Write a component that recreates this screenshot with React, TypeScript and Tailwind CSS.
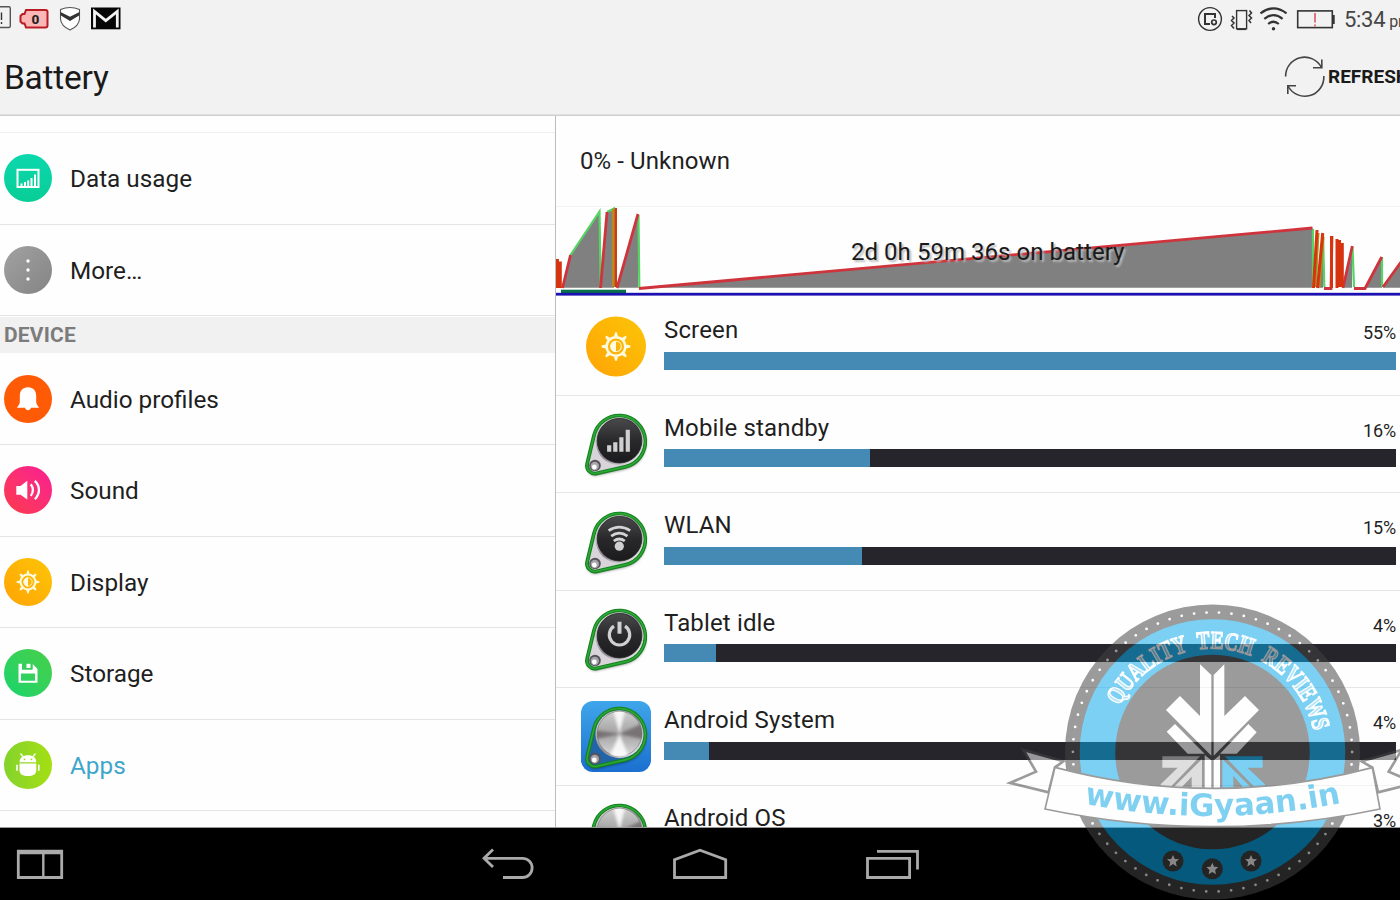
import type { ReactNode } from "react";

const ringDots = { r: 139.6, gap: (2 * Math.PI * 139.6) / 70 };

function Sun({ cx, cy, s }: { cx: number; cy: number; s: number }) {
  return (
    <g transform={`translate(${cx} ${cy}) scale(${s})`} fill="none" stroke="#fffbe0" strokeWidth="2">
      <circle r="7.4" />
      {[0, 45, 90, 135, 180, 225, 270, 315].map((a) => (
        <path key={a} d="M-1.6 -8L-0.7 -11.4H0.7L1.6 -8Z" fill="#fffbe0" stroke="none" transform={`rotate(${a})`} />
      ))}
      <circle r="4.2" strokeWidth="0.8" />
      <path d="M0 -4.4A4.4 4.4 0 0 0 0 4.4Z" fill="#fffbe0" stroke="none" />
    </g>
  );
}

const glyphs: Record<string, ReactNode> = {
  data: (
    <g fill="none" stroke="#fff">
      <rect x="13.5" y="15.8" width="21" height="17.2" strokeWidth="2" />
      <path d="M17.5 32V29.5M21 32V28M24.2 32V26.5M27.5 32V24M31 32V20.5" strokeWidth="2" />
    </g>
  ),
  more: (
    <g fill="#fff">
      <circle cx="24" cy="15" r="1.7" />
      <circle cx="24" cy="24" r="1.7" />
      <circle cx="24" cy="33" r="1.7" />
    </g>
  ),
  bell: (
    <path
      d="M24 12.3C18.5 12.3 15.8 16 15.8 21V26.5C15.8 29.5 14.2 31 12.7 32.8H21C21.4 34.4 22.6 35.2 24 35.2S26.6 34.4 27 32.8H35.3C33.8 31 32.2 29.5 32.2 26.5V21C32.2 16 29.5 12.3 24 12.3Z"
      fill="#fff"
    />
  ),
  sound: (
    <g>
      <path d="M12.3 20H16.5L23.3 14.8V33.5L16.5 28.7H12.3Z" fill="#fff" />
      <path d="M26.8 18.3Q31 24 26.8 29.8M30.8 14.8C36.3 20 36.3 28 30.8 33.2" fill="none" stroke="#fff" strokeWidth="2.3" />
    </g>
  ),
  display: <Sun cx={24} cy={24} s={1} />,
  storage: (
    <g fill="#fff">
      <path
        fillRule="evenodd"
        d="M14.5 14.8H18V20.5H28.5V14.8L33.5 20V33.8H14.5ZM17 24.5V31.7H31V24.5Z"
      />
      <path d="M18 14.8H28.5V20.5H18Z" fill="#34cf5a" />
      <path d="M22.5 14.8H26.5V19H22.5Z" />
    </g>
  ),
  apps: (
    <g fill="#fff">
      <path d="M15.5 21.3C15.5 16.8 19 14.2 24 14.2S32.3 16.8 32.3 21.3Z" />
      <path d="M19 15.5L16.5 12.5M29 15.5L31.5 12.5" stroke="#fff" strokeWidth="1.2" />
      <circle cx="20.5" cy="18.3" r="0.9" fill="#98dc1c" />
      <circle cx="27.5" cy="18.3" r="0.9" fill="#98dc1c" />
      <path d="M15.5 22.5H32.3V29C32.3 33.5 28.8 35 24 35S15.5 33.5 15.5 29Z" />
      <rect x="12.2" y="23.5" width="1.6" height="6.5" rx="0.8" />
      <rect x="34" y="23.5" width="1.6" height="6.5" rx="0.8" />
    </g>
  ),
};

function SettingRow({ icon, label, disc, active }: { icon: string; label: string; disc: string; active?: boolean }) {
  return (
    <li className="flex h-[91.5px] items-center border-b border-[#e4e4e4] pl-1">
      <span className={`flex size-12 rounded-full ${disc}`}>
        <svg viewBox="0 0 48 48" className="size-12">
          {glyphs[icon]}
        </svg>
      </span>
      <span className={`pt-[2px] pl-[18px] text-[24.3px] leading-8 ${active ? "text-[#3fa6cb]" : "text-[#1f1f1f]"}`}>{label}</span>
    </li>
  );
}

const tear = "M14 31.4A26 26 0 1 1 45.1 62.9L16.8 69.3A8 8 0 0 1 7.2 59.6Z";

function TearIcon({ kind, id }: { kind: string; id: string }) {
  const metal = kind === "system" || kind === "os";
  return (
    <svg viewBox="0 0 72 76" className="h-[76px] w-[72px] overflow-visible">
      <defs>
        <linearGradient id={`${id}-rim`} x1="0" y1="0" x2="1" y2="1">
          <stop offset="0" stopColor="#e8e8e8" />
          <stop offset="0.5" stopColor="#8c8690" />
          <stop offset="0.85" stopColor="#e0dde0" />
        </linearGradient>
        <linearGradient id={`${id}-disc`} x1="0" y1="0" x2="0" y2="1">
          <stop offset="0" stopColor={metal ? "#d0d0d0" : "#4a4a4c"} />
          <stop offset="0.5" stopColor={metal ? "#a3a1a2" : "#29292b"} />
          <stop offset="1" stopColor={metal ? "#dcdcdc" : "#1b1b1d"} />
        </linearGradient>
        <linearGradient id={`${id}-bg`} x1="0" y1="0" x2="0" y2="1">
          <stop offset="0" stopColor="#3fa6ea" />
          <stop offset="1" stopColor="#1c6fd0" />
        </linearGradient>
        <filter id={`${id}-blur`} x="-20%" y="-20%" width="140%" height="140%">
          <feGaussianBlur stdDeviation="1.8" />
        </filter>
        <clipPath id={`${id}-clip`}>
          <circle cx="39.5" cy="37" r="22.5" />
        </clipPath>
      </defs>
      {kind === "system" && <rect x="1" y="4" width="70" height="71" rx="12" fill={`url(#${id}-bg)`} />}
      <path d={tear} fill="#000" opacity="0.5" transform="translate(0.5 2)" filter={`url(#${id}-blur)`} />
      <path d={tear} fill={kind === "system" ? "#2165a8" : "#d9d4da"} stroke="#14801f" strokeWidth="3.8" />
      <path d={tear} fill="none" stroke="#2ca835" strokeWidth="1.6" />
      <g transform="translate(0 1.2)">
        <circle cx="39.5" cy="36" r="24" fill={`url(#${id}-rim)`} />
        <circle cx="39.5" cy="35.5" r="22.3" fill={`url(#${id}-disc)`} stroke={metal ? "#888" : "#222"} strokeWidth="0.8" />
        {kind === "signal" && <path d="M29.2 46.5V40M35.3 46.5V37M41.4 46.5V32M47.8 46.5V24.5" stroke="#cfcfcf" strokeWidth="4.2" />}
        {kind === "wifi" && (
          <g fill="none" stroke="#d4d4d4" strokeWidth="2.7">
            <path d="M28.6 27.5Q39.3 20.5 50.2 27.5M31.2 33Q39.3 27 47.5 33M33.8 37.8Q39.3 33.8 44.8 37.8" />
            <circle cx="39.3" cy="43" r="4.6" fill="#cfcfcf" stroke="none" />
          </g>
        )}
        {kind === "power" && (
          <g fill="none" stroke="#d0d0d0" strokeWidth="3.2">
            <path d="M34 26A10.2 10.2 0 1 0 45 26" />
            <path d="M39.5 21.5V33.5" strokeWidth="4" />
          </g>
        )}
      </g>
      {metal && (
        <g clipPath={`url(#${id}-clip)`}>
          <g filter={`url(#${id}-blur)`}>
            <path d="M39.5 37L31 5H47Z" fill="#fff" opacity="0.85" />
            <path d="M39.5 37L26 68H52Z" fill="#fff" opacity="0.85" />
            <path d="M39.5 37L72 22V44Z" fill="#6d6669" opacity="0.8" />
            <path d="M39.5 37L8 32V44Z" fill="#6d6669" opacity="0.8" />
          </g>
        </g>
      )}
      <circle cx="15" cy="61.5" r="5.8" fill="#55515a" />
      <circle cx="14.8" cy="62" r="4.2" fill="#a8a5aa" />
      <circle cx="14.3" cy="63" r="2.4" fill="#fff" />
    </svg>
  );
}

const usage = [
  { kind: "screen", label: "Screen", pct: "55%", fill: 732 },
  { kind: "signal", label: "Mobile standby", pct: "16%", fill: 206 },
  { kind: "wifi", label: "WLAN", pct: "15%", fill: 198 },
  { kind: "power", label: "Tablet idle", pct: "4%", fill: 52 },
  { kind: "system", label: "Android System", pct: "4%", fill: 44.5 },
  { kind: "os", label: "Android OS", pct: "3%", fill: 36 },
];

function UsageRow({ kind, label, pct, fill }: (typeof usage)[number]) {
  return (
    <li className="flex h-[97.5px] shrink-0 border-b border-[#e6e6e6] pl-6">
      <div className="h-[76px] w-[72px] shrink-0 pt-[8.5px]">
        {kind === "screen" ? (
          <svg viewBox="0 0 72 76" className="h-[76px] w-[72px]">
            <defs>
              <linearGradient id="sun" x1="1" y1="0" x2="0" y2="1">
                <stop offset="0" stopColor="#fcc507" />
                <stop offset="1" stopColor="#ffa305" />
              </linearGradient>
            </defs>
            <circle cx="36" cy="39.5" r="30" fill="url(#sun)" />
            <Sun cx={36} cy={39.5} s={1.26} />
          </svg>
        ) : (
          <TearIcon kind={kind} id={kind} />
        )}
      </div>
      <div className="ml-3 flex w-[732px] shrink-0 flex-col pt-4">
        <div className="flex h-[37.5px] items-start justify-between">
          <span className="text-2xl tracking-[0.15px] text-[#1f1f1f]">{label}</span>
          <span className="pt-[5px] text-lg tracking-[-0.1px] text-[#1f1f1f]">{pct}</span>
        </div>
        <div className="h-[18px] bg-[#25252b]">
          <div className="h-full bg-[#448ab5]" style={{ width: fill }} />
        </div>
      </div>
    </li>
  );
}

function HistoryChart() {
  return (
    <svg viewBox="0 0 845 90" className="h-[90px] w-[845px]" fill="none">
      <g fill="#808080">
        <path d="M6.5 80.7L14.5 48L44 4.5V80.7Z" />
        <path d="M45 80.7L51 5L58 2V80.7Z" />
        <path d="M61 80.7L82 8V80.7Z" />
        <path d="M83 80.7L756.5 21V80.7Z" />
        <path d="M761 80.7L767 30V80.7ZM787 80.7L796 40V80.7ZM809 80.7L826 50V80.7ZM827 80.7L845 56V80.7Z" />
      </g>
      <g stroke="#55d463" strokeWidth="2.2">
        <path d="M14.5 48L43.5 4.5L44.7 80M51 5L58 1.5V80M82.5 8L83.3 81M757 22V80M762 26L760 80M767 27L768.3 80M796.5 40L798 80M826 50V80" />
      </g>
      <path d="M57.5 2V80M758.5 80L762 26M763 80L767 30" stroke="#b98a1c" strokeWidth="3" />
      <g stroke="#cf343c" strokeWidth="2.8">
        <path d="M6.5 81L14.5 48M44.5 81L51 5M61 81L82 7M83 81.5L756.5 21" />
        <path d="M768 81.5H775L776 29M787 81L796.3 39M798 81.5H809L825.7 50M827 80L845 55" />
      </g>
      <path d="M1.4 52V81M4.3 54.5V81M757.5 81L761 23M761.5 81L766.7 26M775.5 29V81M781 32V81M783.5 33V80M786.3 36V80" stroke="#d7330f" strokeWidth="3" />
      <path d="M59.8 1V80" stroke="#cf3a18" strokeWidth="2.4" />
      <rect x="5" y="82.7" width="65" height="3.5" fill="#087046" />
      <rect x="0" y="85.8" width="845" height="2.8" fill="#1c10b0" />
    </svg>
  );
}

function StatusBar() {
  return (
    <div className="flex h-10 justify-between">
      <div className="flex">
        <svg viewBox="0 0 15 40" className="h-10 w-[15px]" fill="none" stroke="#555" strokeWidth="1.4">
          <rect x="-12" y="6.7" width="22.3" height="20.8" rx="1.5" />
          <path d="M1.5 12.5V20M1.5 22V24" stroke="#333" />
        </svg>
        <svg viewBox="15 0 40 40" className="h-10 w-10">
          <path d="M26 10H45.5Q47.5 10 47.5 12V25.5Q47.5 27.5 45.5 27.5H26L24.5 23.5H22.5L20.5 21.5V16L22.5 14H24.5Z" fill="#fbb6b6" stroke="#b81d24" strokeWidth="2" />
          <text x="35.3" y="23.8" textAnchor="middle" fontSize="13.5" fontWeight="800" fontFamily="Roboto, sans-serif" fill="#222">
            0
          </text>
        </svg>
        <svg viewBox="55 0 30 40" className="h-10 w-[30px]" fill="none">
          <path d="M60.5 9.5Q70 5.5 79.5 9.5V19Q79 26 70 30Q61 26 60.5 19Z" fill="#fff" stroke="#555" strokeWidth="1.1" />
          <path d="M60.5 12L70 16.8L79.5 12V15.3L70 21L60.5 15.3Z" fill="#333" />
        </svg>
        <svg viewBox="85 0 40 40" className="h-10 w-10">
          <rect x="91" y="7.5" width="29.5" height="21.8" fill="#050505" />
          <path d="M94.5 27.5V11.5L105.8 20.7L117.3 11.5V27.5" fill="none" stroke="#f2f2f2" strokeWidth="2.8" />
        </svg>
      </div>
      <div className="flex w-[210px] overflow-hidden">
        <svg viewBox="1190 0 36 40" className="h-10 w-9 shrink-0" fill="none" stroke="#333" strokeWidth="1.4">
          <circle cx="1210" cy="19" r="11.4" />
          <path d="M1210 24H1205V14H1215V18" strokeWidth="2" />
          <circle cx="1214" cy="22.3" r="2.3" strokeWidth="1.7" />
        </svg>
        <svg viewBox="1226 0 30 40" className="h-10 w-[30px] shrink-0" fill="none" stroke="#333" strokeWidth="1.4">
          <rect x="1236.6" y="10.6" width="10" height="18.2" />
          <path d="M1237 29.3H1246" strokeWidth="1.6" />
          <path d="M1232 16L1234 18L1231.5 20.5L1234 23L1231.5 25.5L1234 28.5M1249.5 10.5L1251.5 13L1249 15.5L1251.5 18L1249 20.5L1251 23" strokeWidth="1.5" />
        </svg>
        <svg viewBox="1256 0 36 40" className="h-10 w-9 shrink-0" fill="none" stroke="#333" strokeWidth="2.2">
          <path d="M1260.5 13.3Q1273.5 3.5 1286.5 13.3M1264.3 18.8Q1273.5 11.5 1282.6 18.8M1268.2 24Q1273.5 19.5 1278.8 24" />
          <circle cx="1273.5" cy="28.8" r="1.7" fill="#333" stroke="none" />
        </svg>
        <svg viewBox="1292 0 52 40" className="h-10 w-[52px] shrink-0" fill="none" stroke="#333" strokeWidth="1.6">
          <rect x="1297.7" y="10.9" width="34.6" height="16.7" />
          <path d="M1333.5 15V24" strokeWidth="2.4" />
          <path d="M1315 13V22.5M1315 24.5V26.5" stroke="#dc5864" strokeWidth="1.6" />
        </svg>
        <span className="flex shrink-0 items-baseline pt-[5px] whitespace-nowrap text-[#454545]">
          <span className="text-[22px] leading-[30px] tracking-[-0.3px]">5:34</span>
          <span className="pl-1 text-base tracking-[-0.3px]">pm</span>
        </span>
      </div>
    </div>
  );
}

function SiteBadge() {
  return (
    <svg viewBox="1000 600 400 300" className="absolute top-[600px] left-[1000px] h-[300px] w-[400px] opacity-[0.53]">
      <defs>
        <path id="badge-arc" d="M1119.4 706.6A103.5 103.5 0 0 1 1314.5 734.5" />
        <path id="ribbon-arc" d="M1083 803.5Q1213 829 1343 802.5" />
      </defs>
      <circle cx="1212.5" cy="752" r="147.5" fill="#444" />
      <circle cx="1212.5" cy="752" r="115" fill="none" stroke="#09a9ea" strokeWidth="35.5" />
      <circle cx="1212.5" cy="752" r={ringDots.r} fill="none" stroke="#fff" strokeWidth="2.8" strokeLinecap="round" strokeDasharray={`0 ${ringDots.gap}`} />
      <text
        fontFamily="'Liberation Serif', serif"
        fontWeight="700"
        fontSize="25"
        wordSpacing="7"
        fill="#fff"
        fillOpacity="0.45"
        stroke="#fff"
        strokeWidth="1.5"
      >
        <textPath href="#badge-arc" startOffset="1" textLength="256" lengthAdjust="spacingAndGlyphs">
          QUALITY TECH REVIEWS
        </textPath>
      </text>
      {[
        [1173, 861],
        [1212.3, 868.8],
        [1251, 861],
      ].map(([x, y]) => (
        <g key={x} transform={`translate(${x} ${y})`}>
          <circle r="10.5" fill="#444" />
          <path d="M0 -6L1.8 -2.1L6 -1.8L2.8 1.1L3.7 5.4L0 3.1L-3.7 5.4L-2.8 1.1L-6 -1.8L-1.8 -2.1Z" fill="#fff" />
        </g>
      ))}
      <g transform="translate(1140 655) scale(0.33333)" fill="#fff">
        <path d="M180 28L214 60V302L78 165L120 123L180 183Z" />
        <path d="M221 60L253 28V183L315 123L357 165L221 302Z" />
        <path d="M80 230L105 207L194 296H143ZM350 232L325 207L240 296H290Z" />
        <path d="M194 300L214 316V410H194ZM221 316L240 300V410H221Z" />
        <g fill="#c2c2c2">
          <path d="M67 304H180L88 400H62V388L113 338H67Z" />
          <path d="M186 312V400H155V365L122 400H98Z" />
        </g>
        <g fill="#09a9ea">
          <path d="M254 304H368V338H322L375 388V400H347Z" />
          <path d="M247 312V400H280V362L312 400H336Z" />
        </g>
      </g>
      <g transform="translate(1000 600) scale(0.33333)" stroke="#444">
        <path d="M190 484L70 450L108 515L30 549L146 577L165 502Z" fill="#fff" strokeWidth="8" />
        <path d="M1085 484L1205 450L1166 515L1245 549L1134 577L1117 503Z" fill="#fff" strokeWidth="8" />
        <path d="M165 502Q640 628 1117 503L1140 627Q640 733 135 627Z" fill="#fff" strokeWidth="5" />
      </g>
      <text fontFamily="'DejaVu Sans', sans-serif" fontWeight="700" fontSize="31" fill="#12aae6">
        <textPath href="#ribbon-arc" startOffset="1" textLength="259" lengthAdjust="spacingAndGlyphs">
          www.iGyaan.in
        </textPath>
      </text>
    </svg>
  );
}

export default function App() {
  return (
    <div className="relative flex h-[900px] w-[1400px] flex-col overflow-hidden bg-[#fefefe] font-['Roboto',sans-serif]">
      <header className="flex h-[116px] shrink-0 flex-col border-b border-[#cfcfcf] bg-[#f2f2f2] shadow-[inset_0_-1px_0_#e0e0e0]">
        <StatusBar />
        <div className="flex h-[74px] items-center justify-between">
          <h1 className="pt-[3px] pl-1 text-[33.5px] tracking-[-0.25px] text-[#1a1a1a]">Battery</h1>
          <div className="flex w-[120px] items-center overflow-hidden">
            <svg viewBox="1280 52 48 50" className="h-[50px] w-12 shrink-0" fill="none" stroke="#444" strokeWidth="1.6">
              <path d="M1285.6 76.5A19 19 0 0 1 1321.5 67.5M1323.8 76A19 19 0 0 1 1288 86" />
              <path d="M1321.8 59.5V67.8H1313M1287.8 94V85.8H1296" />
            </svg>
            <span className="text-[19px] font-bold whitespace-nowrap text-[#1a1a1a]">REFRESH</span>
          </div>
        </div>
      </header>

      <main className="flex h-[712px] shrink-0 overflow-hidden border-b border-[#999]">
        <nav className="w-[556px] shrink-0 border-r border-[#bdbdbd]">
          <div className="h-[17px] border-b border-[#f0f0f0]" />
          <ul>
            <SettingRow icon="data" label="Data usage" disc="bg-linear-to-b from-[#0cd8ae] to-[#08cd96]" />
            <SettingRow icon="more" label="More…" disc="bg-linear-to-br from-[#a2a2a2] to-[#848484]" />
          </ul>
          <h2 className="mt-[1px] flex h-[35.5px] items-center bg-[#f1f1f1] pt-[2px] pl-1 text-[21px] font-bold tracking-[0.2px] text-[#7c7c7c]">DEVICE</h2>
          <ul className="pt-[1px]">
            <SettingRow icon="bell" label="Audio profiles" disc="bg-[#ff5a06]" />
            <SettingRow icon="sound" label="Sound" disc="bg-linear-to-tr from-[#fb3a48] to-[#fb1a93]" />
            <SettingRow icon="display" label="Display" disc="bg-linear-to-tr from-[#ffa305] to-[#fcc507]" />
            <SettingRow icon="storage" label="Storage" disc="bg-linear-to-tr from-[#10d46c] to-[#46cf48]" />
            <SettingRow icon="apps" label="Apps" disc="bg-linear-to-r from-[#84d32b] to-[#a4df10]" active />
          </ul>
        </nav>

        <section className="flex w-[844px] shrink-0 flex-col overflow-hidden">
          <div className="flex h-[91px] shrink-0 items-center border-b border-[#f3f3f3] pl-6">
            <span className="text-2xl tracking-[0.1px] text-[#1f1f1f]">0% - Unknown</span>
          </div>
          <div className="relative h-[91px] shrink-0">
            <HistoryChart />
            <span className="absolute top-[29px] left-[295px] text-2xl tracking-[0.04px] whitespace-nowrap text-[#1a1a1a] [text-shadow:2px_2px_2px_#bbb]">
              2d 0h 59m 36s on battery
            </span>
          </div>
          <ul className="flex flex-col">
            {usage.map((row) => (
              <UsageRow key={row.label} {...row} />
            ))}
          </ul>
        </section>
      </main>

      <footer className="flex h-[72px] shrink-0 bg-black">
        <svg viewBox="0 828 470 72" className="h-[72px] w-[470px]" fill="none" stroke="#aaa">
          <path d="M17 852H63" strokeWidth="4.5" />
          <path d="M18.3 850V877.5H61.7V850" strokeWidth="2.8" />
          <path d="M43.3 852V878" strokeWidth="2.4" />
        </svg>
        <svg viewBox="470 828 460 72" className="h-[72px] w-[460px]" fill="none" stroke="#aaa" strokeWidth="2.8">
          <path d="M484 858.3H522.5A9.6 9.6 0 0 1 522.5 877.5H503M493 849.5L484 858.3L493 867" />
          <path d="M674.5 877.5V859.8L700 850.2L725.7 859.8V877.5Z" />
          <path d="M867.5 858.3H909.6V877.5H867.5ZM877 851.3H917.5V869.5" />
        </svg>
      </footer>

      <SiteBadge />
    </div>
  );
}
